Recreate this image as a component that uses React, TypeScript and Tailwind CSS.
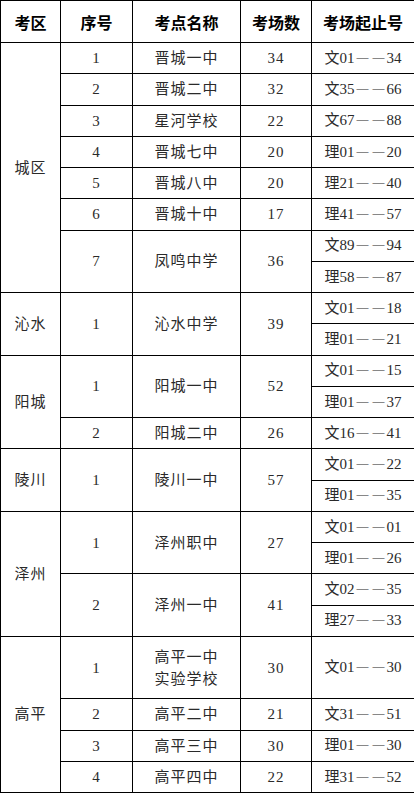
type Row = {
  area?: [string, number];
  no?: [string, number];
  name?: [string, number];
  count?: [string, number];
  range: string;
  tall?: boolean;
};

const rows: Row[] = [
  { area: ["城区", 8], no: ["1", 1], name: ["晋城一中", 1], count: ["34", 1], range: "文01——34" },
  { no: ["2", 1], name: ["晋城二中", 1], count: ["32", 1], range: "文35——66" },
  { no: ["3", 1], name: ["星河学校", 1], count: ["22", 1], range: "文67——88" },
  { no: ["4", 1], name: ["晋城七中", 1], count: ["20", 1], range: "理01——20" },
  { no: ["5", 1], name: ["晋城八中", 1], count: ["20", 1], range: "理21——40" },
  { no: ["6", 1], name: ["晋城十中", 1], count: ["17", 1], range: "理41——57" },
  { no: ["7", 2], name: ["凤鸣中学", 2], count: ["36", 2], range: "文89——94" },
  { range: "理58——87" },
  { area: ["沁水", 2], no: ["1", 2], name: ["沁水中学", 2], count: ["39", 2], range: "文01——18" },
  { range: "理01——21" },
  { area: ["阳城", 3], no: ["1", 2], name: ["阳城一中", 2], count: ["52", 2], range: "文01——15" },
  { range: "理01——37" },
  { no: ["2", 1], name: ["阳城二中", 1], count: ["26", 1], range: "文16——41" },
  { area: ["陵川", 2], no: ["1", 2], name: ["陵川一中", 2], count: ["57", 2], range: "文01——22" },
  { range: "理01——35" },
  { area: ["泽州", 4], no: ["1", 2], name: ["泽州职中", 2], count: ["27", 2], range: "文01——01" },
  { range: "理01——26" },
  { no: ["2", 2], name: ["泽州一中", 2], count: ["41", 2], range: "文02——35" },
  { range: "理27——33" },
  { area: ["高平", 4], no: ["1", 1], name: ["高平一中\n实验学校", 1], count: ["30", 1], range: "文01——30", tall: true },
  { no: ["2", 1], name: ["高平二中", 1], count: ["21", 1], range: "文31——51" },
  { no: ["3", 1], name: ["高平三中", 1], count: ["30", 1], range: "理01——30" },
  { no: ["4", 1], name: ["高平四中", 1], count: ["22", 1], range: "理31——52" },
];

const cell = "border border-black p-0 text-center align-middle";

function Cell({ v }: { v?: [string, number] }) {
  if (!v) return null;
  return (
    <td rowSpan={v[1]} className={cell}>
      {v[0].split("\n").map((line) => (
        <div key={line} className="leading-[22px] tracking-[1px]">
          {line}
        </div>
      ))}
    </td>
  );
}

// keep the dashes as text, just spaced apart like the full-width ones
function Range({ text }: { text: string }) {
  const [head, tail] = text.split("——");
  return (
    <span className="whitespace-nowrap">
      {head}
      <span className="mx-[2px] align-[2px] text-[12px]">
        <span className="mr-[4px]">—</span>—
      </span>
      {tail}
    </span>
  );
}

export default function App() {
  return (
    <div className="min-h-screen bg-white">
      <table
        className="w-[414px] table-fixed border-collapse text-[15px] text-[#2a2a2a]"
        style={{ fontFamily: '"Liberation Serif", "Noto Sans CJK SC", serif' }}
      >
        <colgroup>
          <col className="w-[60px]" />
          <col className="w-[72px]" />
          <col className="w-[108px]" />
          <col className="w-[71px]" />
          <col className="w-[103px]" />
        </colgroup>
        <thead>
          <tr
            className="h-[42px] text-[16px] font-bold text-black"
            style={{ fontFamily: '"Noto Sans CJK SC", sans-serif' }}
          >
            {["考区", "序号", "考点名称", "考场数", "考场起止号"].map((h) => (
              <th key={h} className={cell + " font-bold"}>
                {h}
              </th>
            ))}
          </tr>
        </thead>
        <tbody>
          {rows.map((r, i) => (
            <tr key={i} className={r.tall ? "h-[62.5px]" : "h-[31.25px]"}>
              <Cell v={r.area} />
              <Cell v={r.no} />
              <Cell v={r.name} />
              <Cell v={r.count} />
              <td className={cell}>
                <Range text={r.range} />
              </td>
            </tr>
          ))}
        </tbody>
      </table>
    </div>
  );
}
